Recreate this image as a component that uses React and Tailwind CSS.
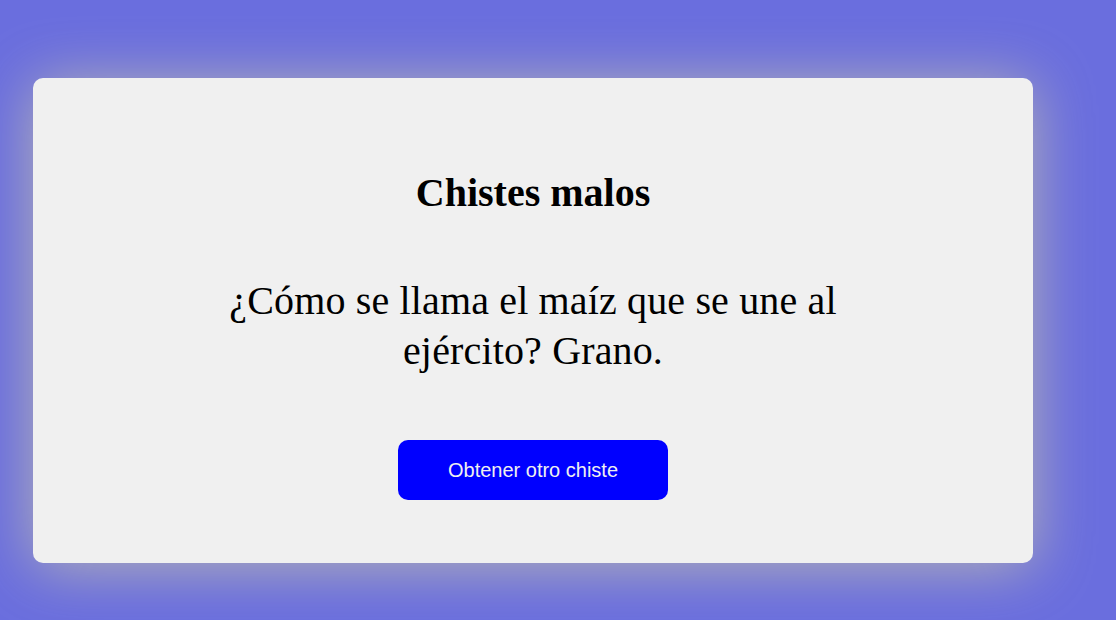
import React, { useState } from 'react';

const JOKES = [
  '¿Cómo se llama el maíz que se une al ejército? Grano.',
  '¿Qué le dice una iguana a su hermana gemela? Somos iguanitas.',
  '¿Por qué el libro de matemáticas está triste? Porque tiene muchos problemas.',
];

const App = () => {
  const [index, setIndex] = useState(0);

  const nextJoke = () => {
    setIndex(prev => (prev + 1) % JOKES.length);
  };

  return (
    <div className="min-h-screen w-full bg-[#6a6ede] pl-[33px] pt-[78px]">
      <div className="w-[1000px] h-[485px] bg-[#f0f0f0] rounded-[10px] shadow-[0_4px_60px_rgba(182,180,182,1)] flex flex-col items-center pt-[92px] font-['Liberation_Serif',serif] text-black">
        <h1 className="text-[40px] font-bold leading-[46px]">Chistes malos</h1>

        {/* Joke text */}
        <p className="mt-[60px] max-w-[680px] text-center text-[40px] leading-[50px] tracking-[0.15px]">
          {JOKES[index]}
        </p>

        <button
          onClick={nextJoke}
          className="mt-[64px] w-[270px] h-[60px] bg-[#0000ff] text-[#f0f0f0] rounded-[10px] font-['Liberation_Sans',Arial,sans-serif] text-[20px] cursor-pointer"
        >
          Obtener otro chiste
        </button>
      </div>
    </div>
  );
};

export default App;
